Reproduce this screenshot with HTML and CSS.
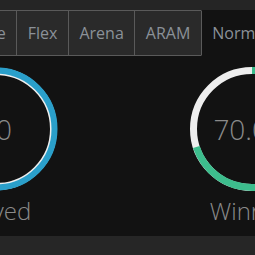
FILE: index.html
```html
<!DOCTYPE html>
<html>
<head>
<meta charset="utf-8">
<link rel="stylesheet" href="styles.css">
</head>
<body>
<div class="page">
  <div class="header">
    <div class="tabs">
      <div class="tab">Solo Queue</div>
      <div class="tab">Flex</div>
      <div class="tab">Arena</div>
      <div class="tab">ARAM</div>
      <div class="tab active">Normal</div>
    </div>
  </div>
  <div class="stats">
    <div class="stat">
      <div class="ring">
        <svg width="124" height="124" viewBox="0 0 124 124">
          <circle class="track" cx="62" cy="62" r="57.5" />
          <circle class="bar blue" cx="62" cy="62" r="58.5" pathLength="100" stroke-dasharray="100 100" transform="rotate(-90 62 62)" />
        </svg>
        <div class="value">10</div>
      </div>
      <div class="label">Played</div>
    </div>
    <div class="stat">
      <div class="ring">
        <svg width="124" height="124" viewBox="0 0 124 124">
          <circle class="track" cx="62" cy="62" r="58.5" />
          <circle class="bar green" cx="62" cy="62" r="58.5" pathLength="100" stroke-dasharray="70 100" transform="rotate(-90 62 62)" />
        </svg>
        <div class="value">70.0%</div>
      </div>
      <div class="label">Winrate</div>
    </div>
  </div>
  <div class="footer"></div>
</div>
</body>
</html>
```

FILE: styles.css
```css
html, body {
  margin: 0;
  padding: 0;
  background: #121212;
  overflow: hidden;
}
.page {
  width: 255px;
  height: 255px;
  overflow: hidden;
  font-family: "Open Sans", "Noto Sans", sans-serif;
}
.header {
  background: #252525;
  padding-top: 10px;
}
.tabs {
  display: flex;
  margin-left: -92px;
  white-space: nowrap;
}
.tab {
  flex: none;
  height: 44px;
  line-height: 44px;
  padding: 0 10.5px;
  font-size: 16px;
  color: #8b9198;
  background: #2a2a2a;
  border-top: 1px solid #5a5a5a;
  border-bottom: 1px solid #5a5a5a;
  border-left: 1px solid #5a5a5a;
}
.tab.active {
  background: #121212;
  border-top-color: #121212;
  border-bottom-color: #121212;
  color: #8b9198;
}
.stats {
  display: flex;
  margin-left: -132px;
  padding-top: 11px;
  height: 169px;
  background: #121212;
}
.stat {
  flex: none;
  width: 256px;
  display: flex;
  flex-direction: column;
  align-items: center;
}
.ring {
  display: grid;
  width: 124px;
  height: 124px;
}
.ring svg, .ring .value {
  grid-area: 1 / 1;
}
.ring .value {
  align-self: center;
  justify-self: center;
  font-size: 28px;
  font-weight: 300;
  color: #8a8a8a;
  white-space: nowrap;
}
.track {
  fill: none;
  stroke: #eeeeee;
  stroke-width: 7;
}
.bar {
  fill: none;
  stroke-width: 6;
}
.bar.green {
  stroke-width: 7;
}
.blue { stroke: #2a9fca; }
.green { stroke: #3dbd8d; }
.label {
  margin-top: 3px;
  font-size: 24px;
  font-weight: 300;
  color: #8a8a8a;
  white-space: nowrap;
}
.footer {
  height: 40px;
  background: #262626;
}
```
